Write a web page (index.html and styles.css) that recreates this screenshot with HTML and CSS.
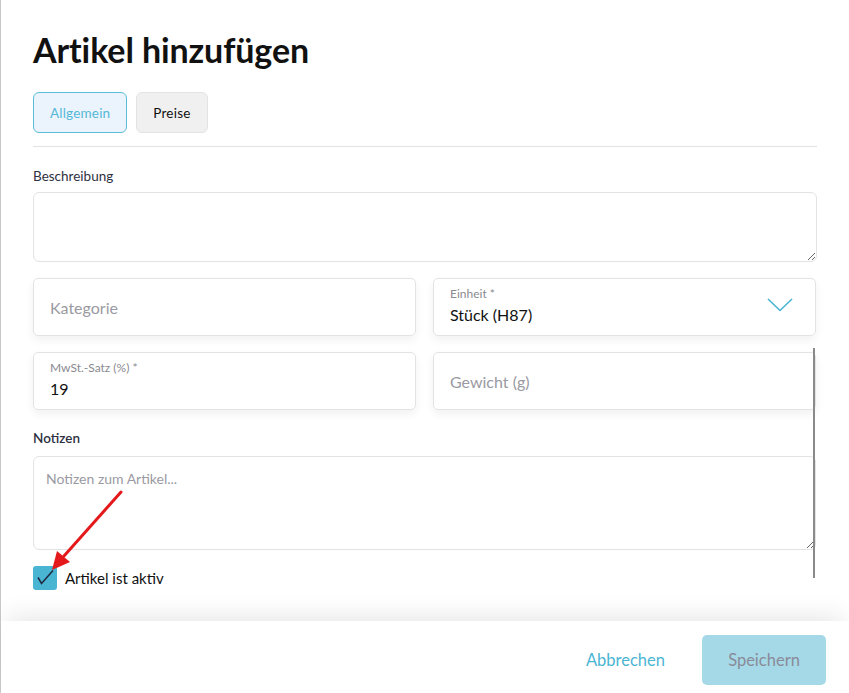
FILE: index.html
```html
<!DOCTYPE html>
<html lang="de">
<head>
   <meta charset="UTF-8">
   <meta name="viewport" content="width=device-width, initial-scale=1">
   <link rel="stylesheet" href="styles.css">
   <title>Artikel hinzufügen</title>
</head>

<body>

   <div class="modal">
      <div class="kopf">
         <h1>Artikel hinzufügen</h1>

         <div class="tabs">
            <button class="tab gewaehlt">Allgemein</button>
            <button class="tab">Preise</button>
         </div>

         <div class="trenner"></div>
      </div>

      <div class="inhalt">
         <label class="titel erster">Beschreibung</label>
         <textarea class="feldText beschreibung"></textarea>

         <div class="raster">
            <div class="feld">
               <span class="platzhalter">Kategorie</span>
            </div>

            <div class="feld auswahl">
               <div>
                  <span class="klein">Einheit *</span>
                  <span class="wert">Stück (H87)</span>
               </div>
               <svg class="pfeil" width="26" height="14" viewBox="0 0 26 14">
                  <polyline points="1,1 13,12.5 25,1" fill="none" stroke="#4ab5d3" stroke-width="1.6"/>
               </svg>
            </div>

            <div class="feld">
               <div>
                  <span class="klein">MwSt.-Satz (%) *</span>
                  <span class="wert">19</span>
               </div>
            </div>

            <div class="feld">
               <span class="platzhalter">Gewicht (g)</span>
            </div>
         </div>

         <label class="titel notizen">Notizen</label>
         <textarea class="feldText notiz" placeholder="Notizen zum Artikel..."></textarea>

         <div class="aktivZeile">
            <span class="haken">
               <svg width="24" height="24" viewBox="0 0 24 24">
                  <polyline points="5,11.5 8.5,17.5 20,4.5" fill="none" stroke="#1d2740" stroke-width="1.5"/>
               </svg>
            </span>
            <span>Artikel ist aktiv</span>
         </div>

         <div class="scrollbalken"></div>
      </div>

      <div class="fuss">
         <button class="abbrechen">Abbrechen</button>
         <button class="speichern">Speichern</button>
      </div>
   </div>

   <!-- Markierung -->
   <svg class="markierung" width="849" height="693" viewBox="0 0 849 693">
      <line x1="121" y1="492" x2="64" y2="556" stroke="#e3191c" stroke-width="3" stroke-linecap="round"/>
      <polygon points="52,570 57,551 70,562" fill="#e3191c"/>
   </svg>

</body>
</html>
```

FILE: styles.css
```css
* {
   margin:0;
   padding:0;
   box-sizing:border-box;
   font-family:Lato, "Noto Sans", sans-serif;
}

body {
   background:#fff;
   width:849px;
   height:693px;
   overflow:hidden;
   position:relative;
   color:#1b1f2e;
}

.modal {
   border-left:1px solid #c9c9c9;
   height:693px;
   display:flex;
   flex-direction:column;
}

.kopf {
   padding:30px 32px 22px 32px;
}

h1 {
   font-size:34px;
   line-height:40px;
   font-weight:700;
   color:#111;
   letter-spacing:-0.1px;
}

.tabs {
   display:flex;
   gap:9px;
   margin-top:22px;
}

.tab {
   height:41px;
   padding:0 16px;
   border:1px solid #e3e3e3;
   border-radius:6px;
   background:#f0f0f0;
   font-size:13.5px;
   letter-spacing:.2px;
   color:#111;
}

.tab.gewaehlt {
   background:#ebf4fd;
   border-color:#5bbcd9;
   color:#55b8d6;
}

.trenner {
   margin-top:13px;
   border-top:1px solid #e3e3e6;
}

.inhalt {
   position:relative;
   height:452px;
   overflow:hidden;
   padding:0 32px;
}

.titel {
   display:block;
   font-size:13.5px;
   line-height:16px;
   color:#2d3142;
}

.erster {
   margin-top:-1px;
   margin-bottom:8px;
}

.notizen {
   margin-top:20px;
   margin-bottom:10px;
   font-weight:600;
}

.feldText {
   display:block;
   width:784px;
   border:1px solid #e3e3e6;
   border-radius:6px;
   resize:vertical;
   padding:13px 12px;
   font-size:14px;
   outline:0;
   color:#1b1f2e;
}

.feldText::placeholder {
   color:#9a9aa2;
}

.beschreibung {
   height:70px;
}

.notiz {
   height:94px;
   width:783px;
}

.raster {
   display:grid;
   grid-template-columns:383px 383px;
   column-gap:17px;
   row-gap:16px;
   margin-top:16px;
}

.feld {
   height:58px;
   border:1px solid #e3e3e6;
   border-radius:5px;
   box-shadow:0 4px 10px rgba(0,0,0,.06);
   padding:0 16px;
   display:flex;
   align-items:center;
   justify-content:space-between;
}

.platzhalter {
   font-size:16px;
   color:#9a9aa2;
}

.klein {
   display:block;
   font-size:12px;
   line-height:14px;
   color:#8a8a90;
   margin-top:-2px;
}

.wert {
   display:block;
   font-size:16px;
   line-height:20px;
   margin-top:4px;
   color:#111;
}

.pfeil {
   margin-right:6px;
   margin-top:-4px;
}

.aktivZeile {
   display:flex;
   align-items:center;
   gap:8px;
   margin-top:16px;
   font-size:15px;
   color:#111;
}

.haken {
   width:24px;
   height:24px;
   border-radius:3px;
   background:#4ab5d3;
   display:flex;
}

.scrollbalken {
   position:absolute;
   left:812px;
   top:179px;
   width:2px;
   height:230px;
   background:#8a8a8a;
}

.fuss {
   position:relative;
   height:72px;
   background:#fff;
   box-shadow:0 -10px 26px -6px rgba(0,0,0,.1);
   display:flex;
   align-items:center;
   justify-content:flex-end;
   gap:21px;
   padding:6px 23px 0 0;
}

.abbrechen {
   background:none;
   border:0;
   padding:0 16px;
   font-size:16.5px;
   color:#4ab5d3;
}

.speichern {
   width:124px;
   height:50px;
   border:0;
   border-radius:5px;
   background:#a5d9e7;
   font-size:16.5px;
   color:#8a8b99;
}

.markierung {
   position:absolute;
   left:0;
   top:0;
   pointer-events:none;
}
```
